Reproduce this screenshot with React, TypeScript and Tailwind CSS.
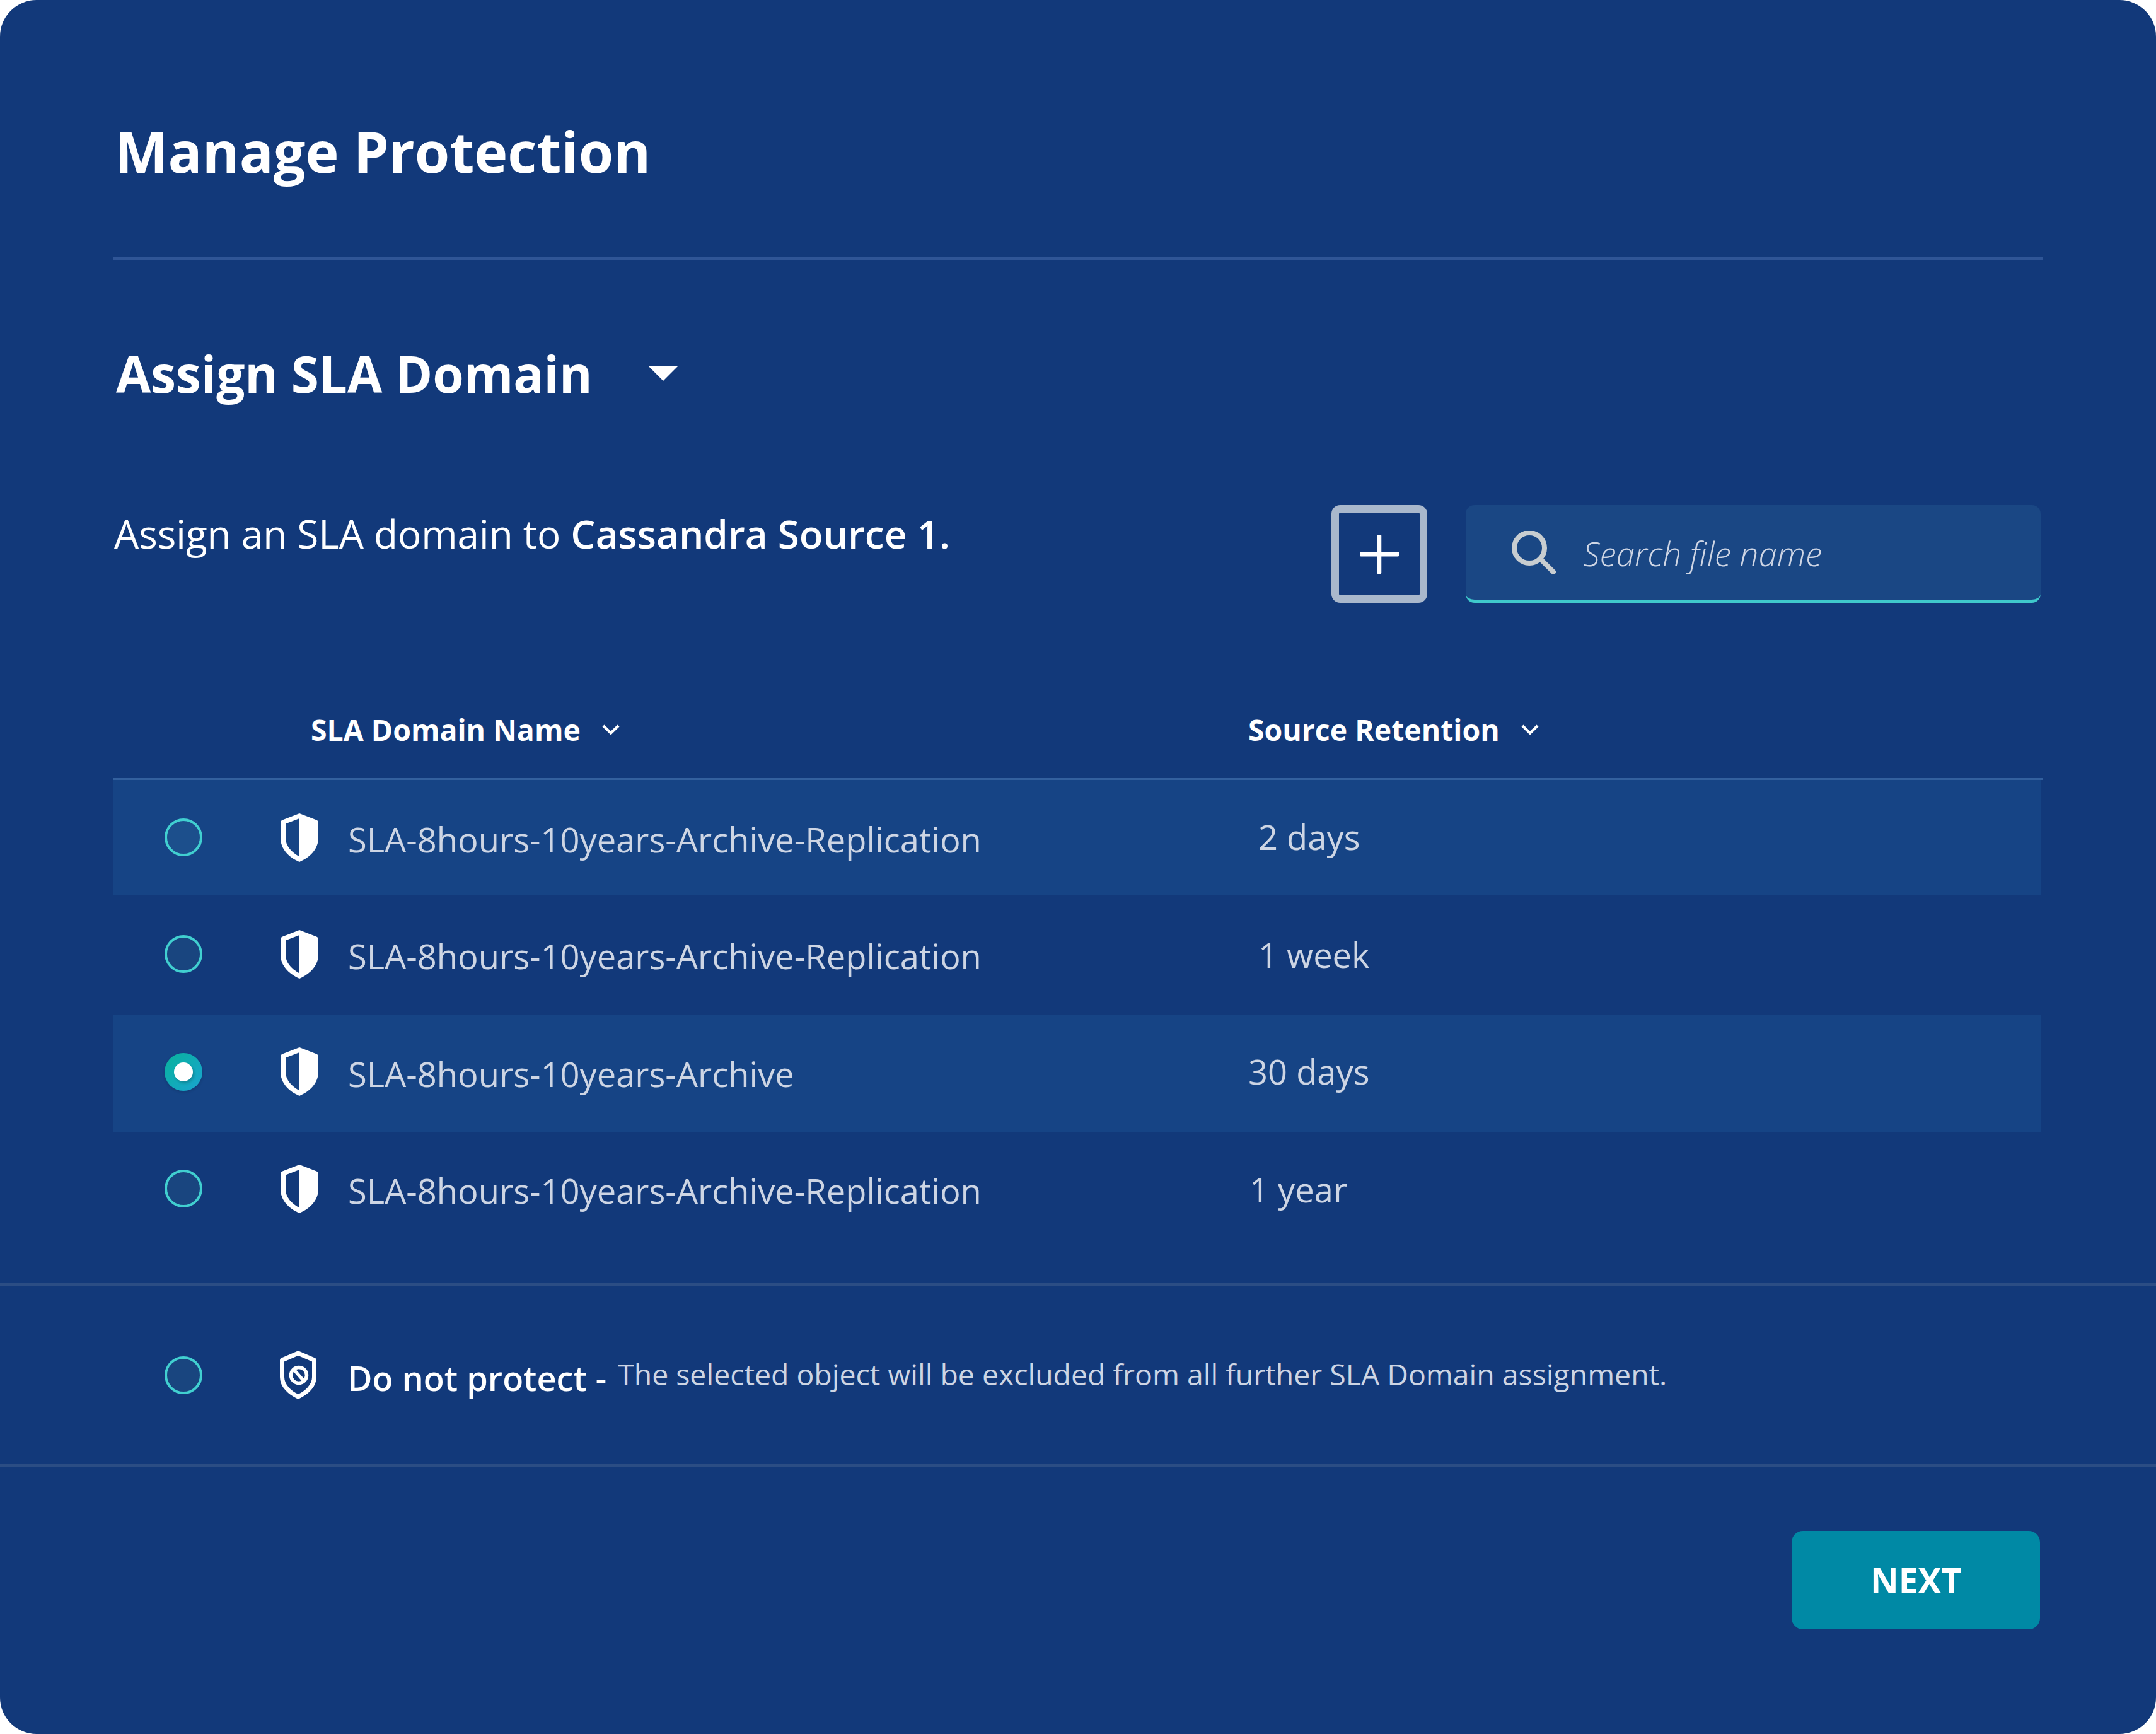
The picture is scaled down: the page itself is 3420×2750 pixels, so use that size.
import React from "react";

const font = { fontFamily: '"Open Sans", sans-serif' };

function Shield() {
  return (
    <svg width="60" height="77" viewBox="0 0 60 77" className="shrink-0">
      <path
        fillRule="evenodd"
        fill="#ffffff"
        d="M30 0 L57 10.5 Q60 11.8 60 15 V39 C60 57 46 70 30 77 C14 70 0 57 0 39 V15 Q0 11.8 3 10.5 Z M30 8 L8 16.5 V39 C8 52 18 62 30 68.5 Z"
      />
    </svg>
  );
}

function NoShield() {
  return (
    <svg width="58" height="77" viewBox="0 0 58 77" className="shrink-0">
      <path
        fill="none"
        stroke="#ffffff"
        strokeWidth="7"
        strokeLinejoin="round"
        d="M29 4 L54.5 15 V42 C54.5 56 42 67 29 73 C16 67 3.5 56 3.5 42 V15 Z"
      />
      <circle cx="30" cy="39" r="12.5" fill="none" stroke="#ffffff" strokeWidth="5.5" />
      <path d="M23 31 L37 47" stroke="#ffffff" strokeWidth="5" />
    </svg>
  );
}

function Radio({ selected, tone }: { selected?: boolean; tone?: string }) {
  if (selected) {
    return (
      <div className="w-[60px] h-[60px] shrink-0 rounded-full bg-gradient-to-br from-[#0bb29b] to-[#1ba3d0] flex items-center justify-center shadow-[0_2px_4px_rgba(0,0,0,0.15)]">
        <div className="w-[30px] h-[30px] rounded-full bg-white shadow-[2px_3px_4px_rgba(0,0,0,0.2)]" />
      </div>
    );
  }
  return <div className={`w-[60px] h-[60px] shrink-0 rounded-full border-[4px] border-[#41cfd0] ${tone ?? "bg-[#19457f]"}`} />;
}

function Chevron() {
  return (
    <svg width="28" height="16" viewBox="0 0 28 16" className="shrink-0">
      <path d="M2 2 L14 13.5 L26 2" fill="none" stroke="#ffffff" strokeWidth="4.4" />
    </svg>
  );
}

function Row({
  name,
  ret,
  retPad,
  band,
  selected,
  height,
}: {
  name: string;
  ret: string;
  retPad: string;
  band?: boolean;
  selected?: boolean;
  height: string;
}) {
  return (
    <div className={`flex items-center pl-[81px] mr-[3px] ${height} ${band ? "bg-[#164485]" : ""}`}>
      <Radio selected={selected} tone={band ? "bg-[#1c4f8c]" : "bg-[#19457f]"} />
      <div className="ml-[124px]">
        <Shield />
      </div>
      <div className="ml-[47px] w-[1428px] shrink-0 pt-[6px] text-[54.25px] leading-[54px] font-normal text-[#cdd5e4] whitespace-nowrap">
        {name}
      </div>
      <div className={`${retPad} text-[54.25px] leading-[54px] font-normal text-[#cdd5e4] whitespace-nowrap`}>{ret}</div>
    </div>
  );
}

export default function App() {
  return (
    <div style={font} className="w-[3420px] h-[2750px] rounded-[58px] bg-[#12397a] overflow-hidden flex flex-col">
      <div className="mx-[180px] flex flex-col">
        <div className="h-[408px] pt-[195px] pl-[2px] text-[89.7px] leading-[88px] font-bold text-white whitespace-nowrap">
          Manage Protection
        </div>
        <div className="h-[4px] bg-[#2f5596]" />

        <div className="mt-[140px] h-[80px] pl-[4px] flex items-center text-[80px] leading-[80px] font-bold text-white whitespace-nowrap">
          <span>Assign SLA Domain</span>
          <svg width="48" height="24" viewBox="0 0 48 24" className="ml-[88px] shrink-0">
            <path d="M0 0 H48 L24 24 Z" fill="#ffffff" />
          </svg>
        </div>

        <div className="mt-[169px] h-[155px] flex items-start justify-between mr-[3px]">
          <div className="pt-[14px] pl-[1px] text-[62px] leading-[62px] text-white whitespace-nowrap">
            Assign an SLA domain to <span className="font-semibold">Cassandra Source 1.</span>
          </div>
          <div className="flex items-start">
            <div className="w-[152px] h-[155px] rounded-[14px] border-[12px] border-[#a9b8cc] flex items-center justify-center">
              <svg width="62" height="62" viewBox="0 0 62 62">
                <path d="M31 2 V60" stroke="#ffffff" strokeWidth="6.5" strokeLinecap="round" />
                <path d="M2 31 H60" stroke="#ffffff" strokeWidth="7" strokeLinecap="round" />
              </svg>
            </div>
            <div className="ml-[61px] w-[912px] h-[155px] rounded-[14px] bg-[#1a4784] border-b-[5px] border-[#3fc9cc] flex items-center pl-[73px]">
              <svg width="70" height="68" viewBox="0 0 70 68" className="shrink-0">
                <circle cx="28" cy="27" r="24" fill="none" stroke="#c8cdd0" strokeWidth="8" />
                <path d="M45 44 L66 65" stroke="#c8cdd0" strokeWidth="8" strokeLinecap="round" />
              </svg>
              <span className="ml-[43px] pt-[4px] text-[53px] leading-[54px] font-light italic text-[#cfd6e5] whitespace-nowrap">
                Search file name
              </span>
            </div>
          </div>
        </div>

        <div className="mt-[177px] h-[48px] flex items-center text-[46.4px] leading-[48px] font-bold text-white whitespace-nowrap">
          <div className="ml-[313px] w-[1487px] flex items-center">
            <span>SLA Domain Name</span>
            <span className="ml-[34px]">
              <Chevron />
            </span>
          </div>
          <div className="flex items-center">
            <span>Source Retention</span>
            <span className="ml-[34px]">
              <Chevron />
            </span>
          </div>
        </div>

        <div className="mt-[53px] h-[3px] bg-[#33609e]" />

        <Row name="SLA-8hours-10years-Archive-Replication" ret="2 days" retPad="pl-[16px] pb-[2px]" band height="h-[182px]" />
        <Row name="SLA-8hours-10years-Archive-Replication" ret="1 week" retPad="pl-[16px] pt-[2px]" height="h-[191px] pb-[3px]" />
        <Row name="SLA-8hours-10years-Archive" ret="30 days" retPad="pl-[0px] pb-[2px]" band selected height="h-[185px] pb-[6px]" />
        <Row name="SLA-8hours-10years-Archive-Replication" ret="1 year" retPad="pl-[2px] pt-[2px]" height="h-[180px]" />
      </div>

      <div className="mt-[60px] h-[4px] bg-[#2b4d84]" />

      <div className="mx-[180px] h-[283px] flex items-center pl-[81px]">
        <Radio />
        <div className="ml-[123px]">
          <NoShield />
        </div>
        <div className="ml-[49px] pt-[8px] text-[54px] leading-[54px] font-semibold text-white whitespace-nowrap">Do not protect -</div>
        <div className="ml-[18px] pb-[4px] text-[46.4px] leading-[48px] font-normal text-[#cdd5e4] whitespace-nowrap">
          The selected object will be excluded from all further SLA Domain assignment.
        </div>
      </div>

      <div className="h-[4px] bg-[#2b4d84]" />

      <div className="mt-[102px] mr-[184px] flex justify-end">
        <div className="w-[394px] h-[156px] rounded-[18px] bg-[#0089a5] flex items-center justify-center text-[55px] leading-[54px] font-bold text-white">
          NEXT
        </div>
      </div>
    </div>
  );
}
